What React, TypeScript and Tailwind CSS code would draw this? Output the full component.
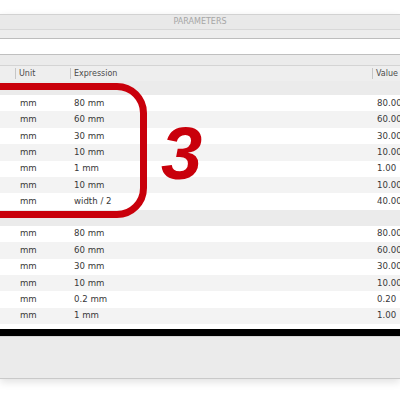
import React from "react";

type Row = { unit: string; expr: string; value: string };

const groupA: Row[] = [
  { unit: "mm", expr: "80 mm", value: "80.00" },
  { unit: "mm", expr: "60 mm", value: "60.00" },
  { unit: "mm", expr: "30 mm", value: "30.00" },
  { unit: "mm", expr: "10 mm", value: "10.00" },
  { unit: "mm", expr: "1 mm", value: "1.00" },
  { unit: "mm", expr: "10 mm", value: "10.00" },
  { unit: "mm", expr: "width / 2", value: "40.00" },
];

const groupB: Row[] = [
  { unit: "mm", expr: "80 mm", value: "80.00" },
  { unit: "mm", expr: "60 mm", value: "60.00" },
  { unit: "mm", expr: "30 mm", value: "30.00" },
  { unit: "mm", expr: "10 mm", value: "10.00" },
  { unit: "mm", expr: "0.2 mm", value: "0.20" },
  { unit: "mm", expr: "1 mm", value: "1.00" },
];

const cols = "grid grid-cols-[15px_55px_302px_1fr]";

function DataRow({ row, odd }: { row: Row; odd: boolean }) {
  return (
    <div
      className={`${cols} h-[16.4px] items-center text-[8.6px] text-[#383838] ${
        odd ? "bg-[#f3f3f3]" : "bg-white"
      }`}
    >
      <div />
      <div className="pl-[5px]">{row.unit}</div>
      <div className="pl-[4px]">{row.expr}</div>
      <div className="pl-[5px] whitespace-nowrap">{row.value}</div>
    </div>
  );
}

function HeaderCell({ label }: { label: string }) {
  return (
    <div className="flex items-center h-full">
      <span className="w-px h-[11px] bg-[#c6c6c6] mr-[3px]" />
      <span>{label}</span>
    </div>
  );
}

export default function App() {
  return (
    <div
      className="relative w-[400px] h-[400px] overflow-hidden bg-white"
      style={{ fontFamily: '"DejaVu Sans", Verdana, sans-serif' }}
    >
      <div className="h-[14px]" />
      <div className="border-t border-[#d2d2d2] shadow-[0_3px_8px_rgba(0,0,0,0.12)]">
        {/* window title */}
        <div className="h-[15px] bg-[#e9e9e9] border-b border-[#d8d8d8] flex items-center justify-center text-[8px] text-[#a6a6a6]">
          PARAMETERS
        </div>
        <div className="h-[9px] bg-[#ededed] border-b border-[#bdbdbd]" />
        {/* filter field */}
        <div className="h-[16px] bg-white border-b border-[#bfbfbf]" />
        <div className="h-[11px] bg-[#ebebeb] border-b border-[#d4d4d4]" />
        {/* column headers */}
        <div className={`${cols} h-[15px] bg-[#eeeeee] text-[8px] text-[#4a4a4a]`}>
          <div />
          <HeaderCell label="Unit" />
          <HeaderCell label="Expression" />
          <HeaderCell label="Value" />
        </div>
        <div className="h-[14px] bg-[#ebebeb]" />
        {groupA.map((r, i) => (
          <DataRow key={`a${i}`} row={r} odd={i % 2 === 1} />
        ))}
        <div className="h-[16px] bg-[#ebebeb]" />
        {groupB.map((r, i) => (
          <DataRow key={`b${i}`} row={r} odd={i % 2 === 1} />
        ))}
        <div className="h-[4.8px] bg-white" />
        <div className="h-[7px] bg-black" />
        <div className="h-px bg-[#d6d6d6]" />
        <div className="h-[42px] bg-[#ebebeb] border-b border-[#c9c9c9]" />
      </div>

      {/* callout frame */}
      <div className="absolute left-[-60px] top-[83px] w-[207px] h-[135px] rounded-[30px] border-[7px] border-[#c9000b]" />
      <div
        className="absolute left-[161px] top-[117px] text-[74px] leading-none font-bold italic text-[#c9000b]"
        style={{ fontFamily: '"Liberation Sans", Arial, sans-serif' }}
      >
        3
      </div>
    </div>
  );
}
